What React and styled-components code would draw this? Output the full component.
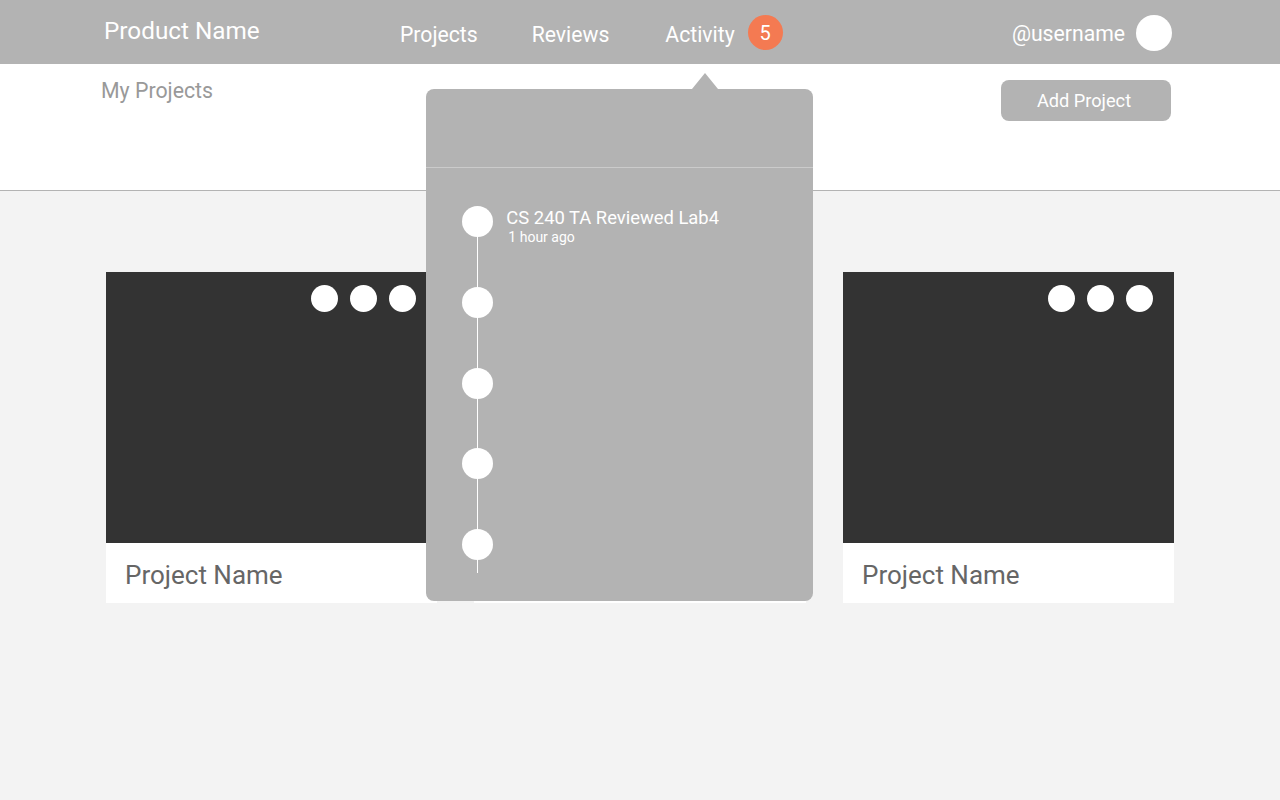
import styled, { createGlobalStyle } from "styled-components";

const GlobalStyle = createGlobalStyle`
  html, body {
    margin: 0;
    padding: 0;
    background: #f3f3f3;
    font-family: Roboto, "Liberation Sans", sans-serif;
  }
  #root {
    min-height: 800px;
  }
`;

const projects = ["Project Name", "Project Name", "Project Name"];
const events = [
  { title: "CS 240 TA Reviewed Lab4", time: "1 hour ago" },
  {},
  {},
  {},
  {},
];

const App = () => {
  return (
    <>
      <GlobalStyle />
      <Page>
        <Header>
          <Brand>Product Name</Brand>
          <Nav>
            <NavItem>Projects</NavItem>
            <NavItem $gap={54}>Reviews</NavItem>
            <NavItem $gap={56}>
              Activity
              <Badge>5</Badge>
              <Dropdown>
                <DropdownHead />
                <Timeline>
                  {events.map((e, i) => (
                    <Event key={i}>
                      <Dot />
                      {e.title && (
                        <EventText>
                          <EventTitle>{e.title}</EventTitle>
                          <EventTime>{e.time}</EventTime>
                        </EventText>
                      )}
                    </Event>
                  ))}
                </Timeline>
              </Dropdown>
            </NavItem>
          </Nav>
          <User>
            @username
            <Avatar />
          </User>
        </Header>
        <SubHeader>
          <Title>My Projects</Title>
          <AddButton>Add Project</AddButton>
        </SubHeader>
        <Cards>
          {projects.map((name, i) => (
            <Card key={i}>
              <Cover>
                <Dots>
                  <SmallDot />
                  <SmallDot />
                  <SmallDot />
                </Dots>
              </Cover>
              <CardName>{name}</CardName>
            </Card>
          ))}
        </Cards>
      </Page>
    </>
  );
};
export default App;

const Page = styled.div`
  width: 1280px;
  min-height: 800px;
  background: #f3f3f3;
`;

const Header = styled.header`
  height: 64px;
  background: #b3b3b3;
  display: flex;
  align-items: center;
  padding: 0 108px 0 104px;
  color: #fff;
  position: relative;
  z-index: 2;
`;

const Brand = styled.div`
  width: 296px;
  font-size: 24.3px;
  margin-top: -3px;
`;

const Nav = styled.nav`
  display: flex;
  align-items: center;
  flex: 1;
`;

const NavItem = styled.div`
  position: relative;
  display: flex;
  align-items: center;
  font-size: 21.2px;
  margin-left: ${(p) => p.$gap || 0}px;
  margin-top: 4px;
`;

const Badge = styled.span`
  width: 35px;
  height: 35px;
  border-radius: 50%;
  background: #f47a52;
  margin-left: 13px;
  margin-top: -3px;
  display: flex;
  align-items: center;
  justify-content: center;
  font-size: 20px;
`;

const Dropdown = styled.div`
  position: absolute;
  left: -239px;
  top: 71px;
  width: 387px;
  height: 512px;
  background: #b3b3b3;
  border-radius: 8px;
  &::before {
    content: "";
    position: absolute;
    top: -16px;
    left: 266px;
    border-left: 13px solid transparent;
    border-right: 13px solid transparent;
    border-bottom: 16px solid #b3b3b3;
  }
`;

const DropdownHead = styled.div`
  height: 78px;
  border-bottom: 1px solid #cbcbcb;
`;

const Timeline = styled.div`
  position: relative;
  padding: 38px 0 0 36px;
  display: flex;
  flex-direction: column;
  gap: 49.75px;
  &::before {
    content: "";
    position: absolute;
    left: 51px;
    top: 54px;
    width: 1px;
    height: 351px;
    background: #fff;
  }
`;

const Event = styled.div`
  display: flex;
  align-items: flex-start;
  height: 31px;
  position: relative;
`;

const Dot = styled.div`
  width: 31px;
  height: 31px;
  border-radius: 50%;
  background: #fff;
  flex-shrink: 0;
`;

const EventText = styled.div`
  margin-left: 13px;
  margin-top: 1px;
  color: #fff;
`;

const EventTitle = styled.div`
  font-size: 18.4px;
  line-height: 22px;
`;

const EventTime = styled.div`
  font-size: 14px;
  line-height: 16px;
  margin-left: 2px;
`;

const User = styled.div`
  display: flex;
  align-items: center;
  font-size: 21.2px;
  margin-top: 2px;
`;

const Avatar = styled.div`
  width: 36px;
  height: 36px;
  border-radius: 50%;
  background: #fff;
  margin-left: 11px;
`;

const SubHeader = styled.div`
  height: 126px;
  background: #fff;
  border-bottom: 1px solid #b3b3b3;
  display: flex;
  justify-content: space-between;
  align-items: flex-start;
  padding: 0 109px 0 101px;
`;

const Title = styled.h2`
  margin: 14px 0 0;
  font-size: 21.3px;
  font-weight: 400;
  color: #999;
`;

const AddButton = styled.button`
  margin-top: 16px;
  width: 170px;
  height: 41px;
  border: none;
  border-radius: 8px;
  background: #b3b3b3;
  color: #fff;
  font-family: Roboto, "Liberation Sans", sans-serif;
  font-size: 18.2px;
  padding: 0 4px 0 0;
`;

const Cards = styled.div`
  display: grid;
  grid-template-columns: 331px 332px 331px;
  column-gap: 37px;
  padding: 81px 0 0 106px;
`;

const Card = styled.div`
  background: #fff;
`;

const Cover = styled.div`
  height: 271px;
  background: #333;
  display: flex;
  justify-content: flex-end;
  align-items: flex-start;
`;

const Dots = styled.div`
  display: flex;
  gap: 12px;
  padding: 13px 21px 0 0;
`;

const SmallDot = styled.div`
  width: 27px;
  height: 27px;
  border-radius: 50%;
  background: #fff;
`;

const CardName = styled.div`
  height: 60px;
  display: flex;
  align-items: center;
  padding: 3px 0 0 19px;
  box-sizing: border-box;
  font-size: 26px;
  color: #666;
`;
